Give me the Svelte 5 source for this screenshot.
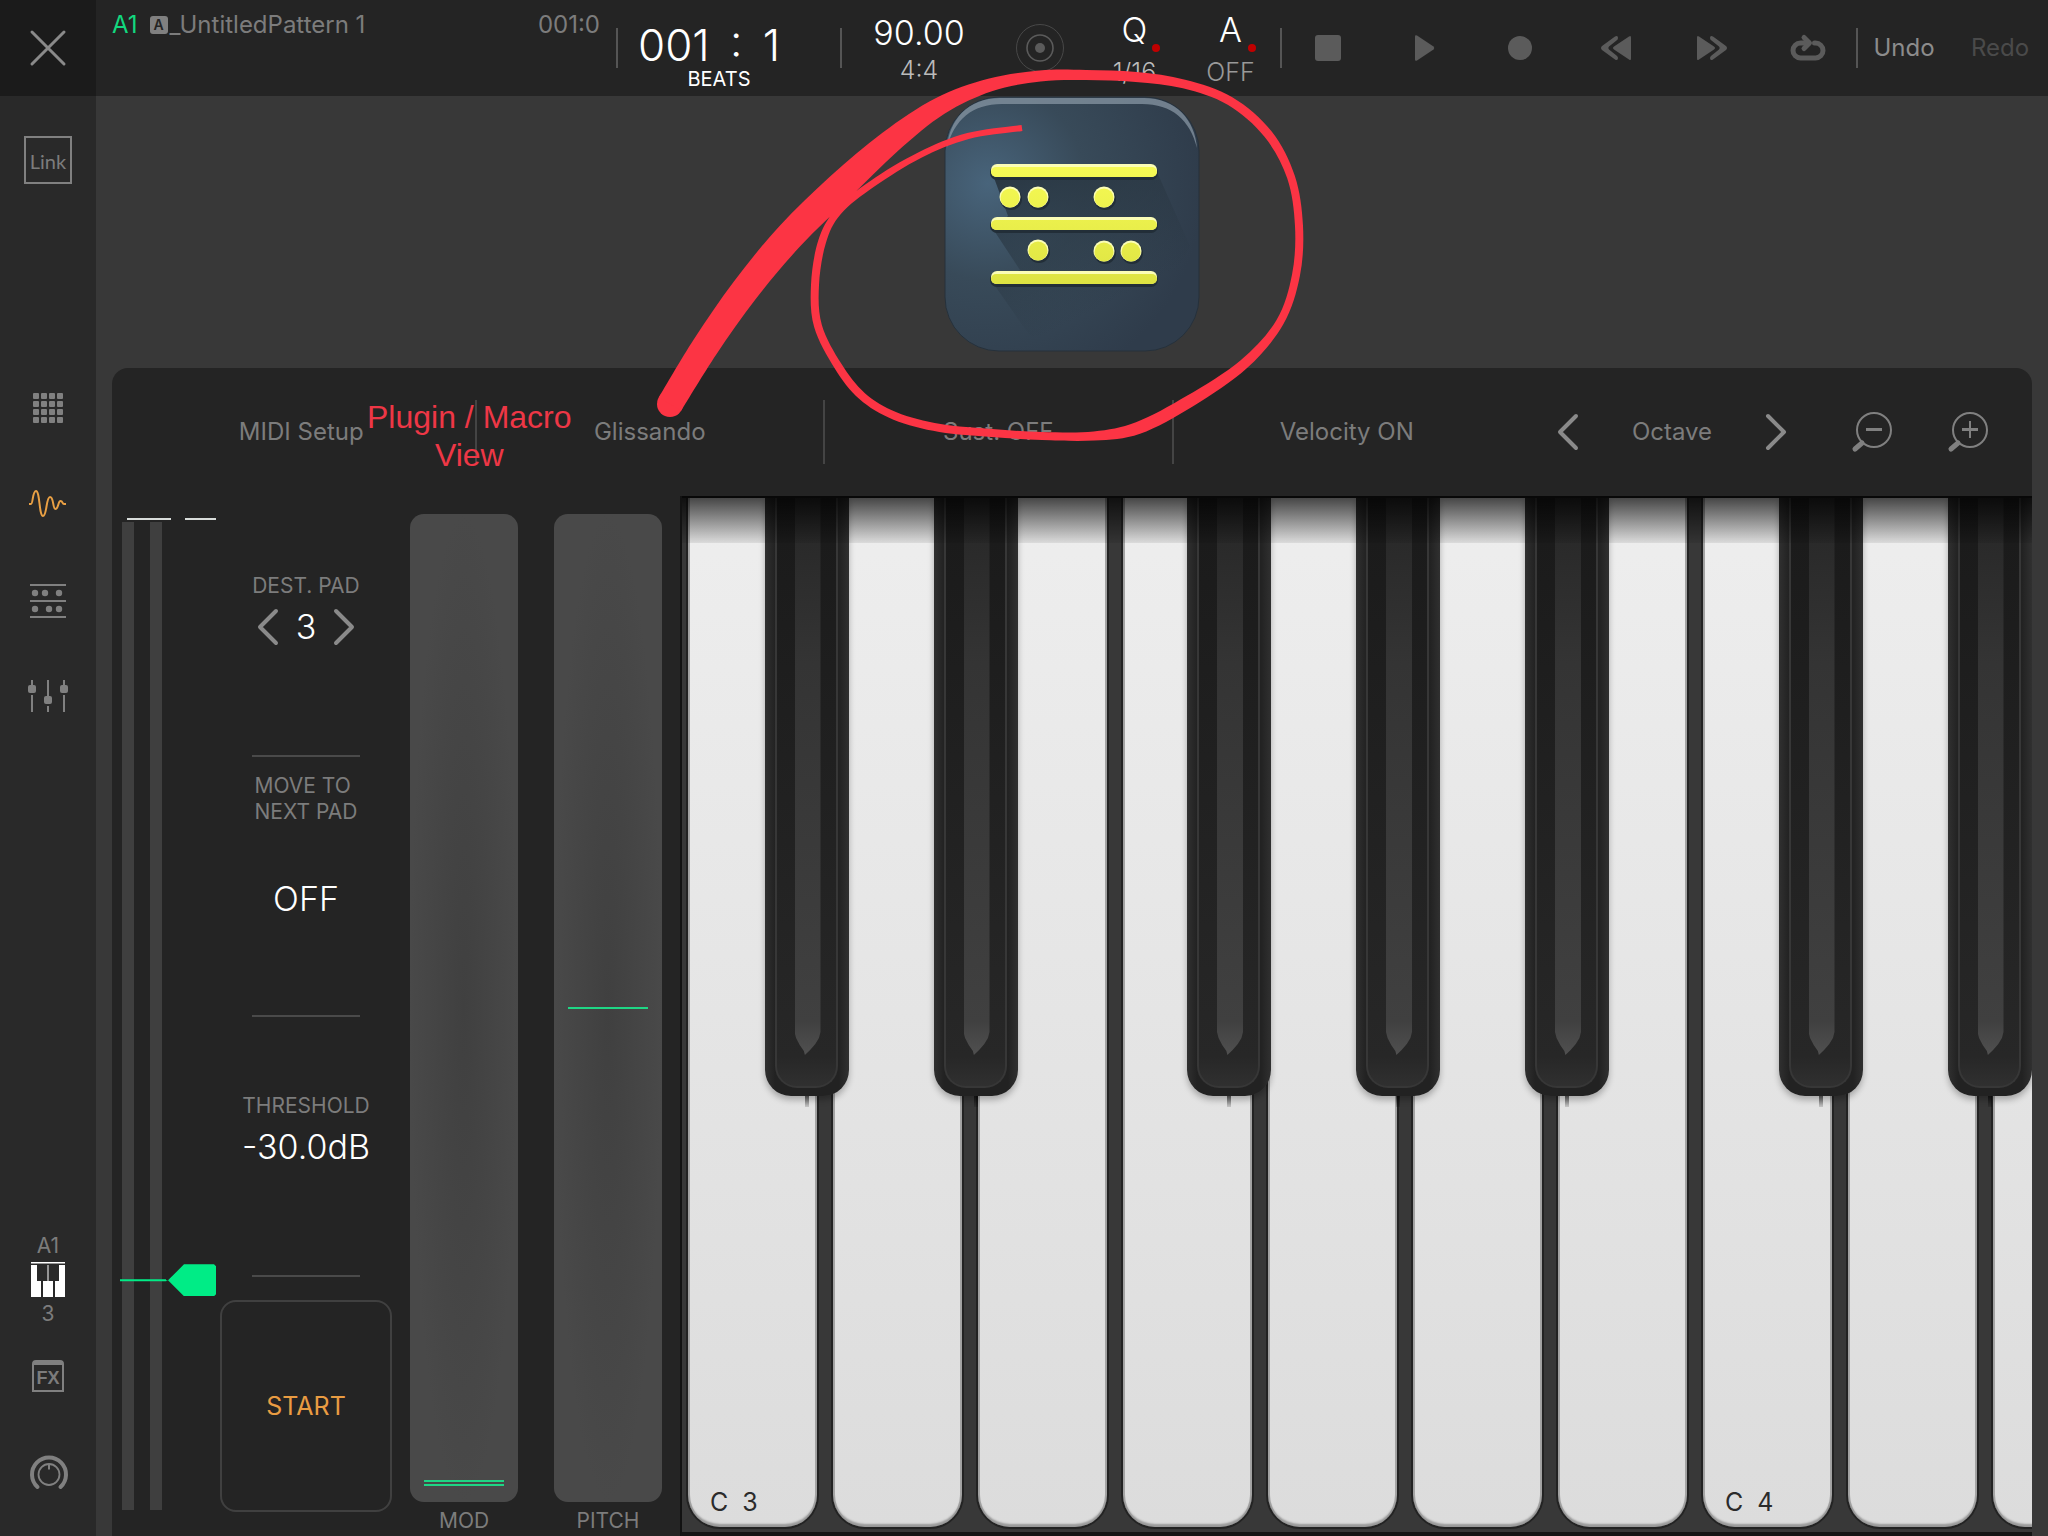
<script lang="ts">
  type Point = [number, number, number];

  const white = Array.from({ length: 10 }, (_, i) => i);
  const black = [1, 3, 6, 8, 10, 13, 15];
  const semitone = 1014 / 12;

  let mod = 0;
  let pitch = 0;
  let threshold = 232;

  // x, y, thickness of the marker line
  const stroke: Point[] = [
    [670, 404, 26], [705, 347, 27], [745, 290, 28], [790, 236, 29],
    [840, 187, 29], [890, 142, 24], [940, 106, 18], [990, 85, 13],
    [1040, 76, 11], [1086, 75, 10], [1136, 77, 10], [1184, 84, 9],
    [1230, 101, 9], [1268, 134, 9], [1291, 177, 8], [1299, 226, 8],
    [1296, 275, 8], [1280, 322, 8], [1244, 364, 10], [1190, 401, 12],
    [1138, 428, 12], [1094, 436, 9], [1042, 436, 8], [992, 433, 8],
    [940, 428, 8], [895, 416, 8], [862, 396, 8], [838, 366, 8],
    [818, 326, 8], [815, 285, 8], [822, 242, 8], [838, 212, 7],
    [872, 184, 7], [920, 155, 6], [968, 136, 6], [1022, 128, 6],
  ];

  function smooth(pts: number[][]): string {
    let d = '';
    for (let i = 0; i < pts.length - 1; i++) {
      const a = pts[Math.max(i - 1, 0)];
      const b = pts[i];
      const c = pts[i + 1];
      const e = pts[Math.min(i + 2, pts.length - 1)];
      d += `C${b[0] + (c[0] - a[0]) / 6} ${b[1] + (c[1] - a[1]) / 6} ${c[0] - (e[0] - b[0]) / 6} ${c[1] - (e[1] - b[1]) / 6} ${c[0]} ${c[1]}`;
    }
    return d;
  }

  function ribbon(pts: Point[]): string {
    const side = (s: number) => pts.map(([x, y, w], i) => {
      const a = pts[Math.max(i - 1, 0)];
      const b = pts[Math.min(i + 1, pts.length - 1)];
      const len = Math.hypot(b[0] - a[0], b[1] - a[1]);
      return [x - s * (b[1] - a[1]) / len * w / 2, y + s * (b[0] - a[0]) / len * w / 2];
    });
    const left = side(-1);
    const right = side(1).reverse();
    return `M${left[0]}${smooth(left)}L${right[0]}${smooth(right)}Z`;
  }
</script>

<div class="screen">
  <header>
    <button class="close" aria-label="Close">
      <svg width="40" height="40" viewBox="0 0 40 40"><path d="M4 4L36 36M36 4L4 36" /></svg>
    </button>
    <div class="pattern">
      <span class="slot">A1</span>
      <span class="badge">A</span>
      <span>_UntitledPattern 1</span>
      <span class="length">001:0</span>
    </div>
    <div class="position">
      <div class="count">001&thinsp; :&thinsp; 1</div>
      <div class="unit">BEATS</div>
    </div>
    <div class="tempo">
      <div class="big">90.00</div>
      <div class="small">4:4</div>
    </div>
    <button class="cell" aria-label="Metronome">
      <svg width="50" height="50" viewBox="0 0 50 50" fill="none" stroke="#5b5b5b">
        <circle cx="25" cy="25" r="23.5" stroke="#484848" />
        <circle cx="25" cy="25" r="13" stroke-width="1.6" />
        <circle cx="25" cy="25" r="5" fill="#5b5b5b" stroke="none" />
      </svg>
    </button>
    <button class="cell mode">
      <span class="big">Q</span>
      <i class="dot"></i>
      <span class="small">1/16</span>
    </button>
    <button class="cell mode">
      <span class="big">A</span>
      <i class="dot"></i>
      <span class="small dim">OFF</span>
    </button>
    <div class="transport">
      <button class="cell" aria-label="Stop">
        <svg width="36" height="36" viewBox="0 0 36 36"><rect x="5" y="5" width="26" height="26" rx="3" /></svg>
      </button>
      <button class="cell" aria-label="Play">
        <svg width="36" height="36" viewBox="0 0 36 36"><path d="M9 6.5Q9 4.500 11 5.500L27.500 16.500Q29 18 27.500 19.500L11 30.500Q9 31.500 9 29.500Z" /></svg>
      </button>
      <button class="cell" aria-label="Record">
        <svg width="36" height="36" viewBox="0 0 36 36"><circle cx="18" cy="18" r="12" /></svg>
      </button>
      <button class="cell" aria-label="Rewind">
        <svg width="36" height="36" viewBox="0 0 36 36">
          <path d="M33 7.500V28.500Q33 31 31 29.500L16 19.500Q14 18 16 16.500L31 6.500Q33 5 33 7.500Z" />
          <path d="M17 6.500Q20 5 20 8Q20 9.500 18.500 10.500L11 16.500Q9.500 18 11 19.500L18.500 25.500Q20 26.500 20 28Q20 31 17 29.500L4 20Q2 18 4 16Z" />
        </svg>
      </button>
      <button class="cell" aria-label="Fast forward">
        <svg width="36" height="36" viewBox="0 0 36 36">
          <g transform="matrix(-1 0 0 1 36 0)">
            <path d="M33 7.500V28.500Q33 31 31 29.500L16 19.500Q14 18 16 16.500L31 6.500Q33 5 33 7.500Z" />
            <path d="M17 6.500Q20 5 20 8Q20 9.500 18.500 10.500L11 16.500Q9.500 18 11 19.500L18.500 25.500Q20 26.500 20 28Q20 31 17 29.500L4 20Q2 18 4 16Z" />
          </g>
        </svg>
      </button>
      <button class="cell" aria-label="Loop">
        <svg class="loop" width="36" height="36" viewBox="0 0 36 36">
          <path d="M14 13H10.500A7.500 7.500 0 0 0 10.500 28H25.500A7.500 7.500 0 0 0 25.500 13H24.500" />
          <path d="M14 7.500L19.500 13L14 18.500" />
        </svg>
      </button>
    </div>
    <button class="cell text">Undo</button>
    <button class="cell text" disabled>Redo</button>
  </header>

  <nav>
    <button class="item link"><span>Link</span></button>
    <button class="item pads" aria-label="Pads">
      <svg width="48" height="48" viewBox="0 0 48 48" fill="#808080">
        {#each [9, 17, 25, 33] as y}
          {#each [9, 17, 25, 33] as x}
            <rect {x} {y} width="6" height="6" rx="1" />
          {/each}
        {/each}
      </svg>
    </button>
    <button class="item" aria-label="Wave">
      <svg width="48" height="48" viewBox="0 0 48 48" fill="none" stroke="#e9a044" stroke-width="2">
        <path d="M5 24H7C9 24 8.500 11 12 11C16 11 15 36 19 36C23 36 22 17 26 17C30 17 28.500 29 31.500 29C34.500 29 34 21 36.500 21C39 21 38 24 40 24H42" />
      </svg>
    </button>
    <button class="item" aria-label="Sequencer">
      <svg width="48" height="48" viewBox="0 0 48 48" fill="#808080">
        <path d="M6 8H42V10H6ZM6 24H42V26H6ZM6 40H42V42H6Z" />
        <circle cx="11" cy="17" r="3.200" /><circle cx="21" cy="17" r="3.200" /><circle cx="35" cy="17" r="3.200" />
        <circle cx="11" cy="33" r="3.200" /><circle cx="25" cy="33" r="3.200" /><circle cx="35" cy="33" r="3.200" />
      </svg>
    </button>
    <button class="item" aria-label="Mixer">
      <svg width="48" height="48" viewBox="0 0 48 48" fill="#808080">
        <path d="M7 8H9V13H7ZM7 23H9V40H7ZM23 8H25V24H23ZM23 34H25V40H23ZM39 8H41V13H39ZM39 23H41V40H39Z" />
        <rect x="4" y="13" width="8" height="8" rx="2" /><rect x="20" y="24" width="8" height="8" rx="2" /><rect x="36" y="13" width="8" height="8" rx="2" />
      </svg>
    </button>
    <button class="item keys">
      <span>A1</span>
      <svg width="36" height="36" viewBox="0 0 36 36" fill="#fff">
        <path d="M1 0H35V1.500H1ZM1 3H7V19H11V35H1ZM17.500 3H18.500V19H23V35H13V19H17.500ZM29 3H35V35H25V19H29Z" />
      </svg>
      <span>3</span>
    </button>
    <button class="item fx"><span>FX</span></button>
    <button class="item" aria-label="Macro">
      <svg width="48" height="48" viewBox="0 0 48 48" fill="none" stroke="#808080">
        <path d="M13.500 39A17 17 0 1 1 36.500 39" stroke-width="4" stroke-linecap="round" />
        <circle cx="25" cy="26.500" r="10.500" stroke-width="1.800" />
        <path d="M25 16V21.500" stroke-width="2" />
      </svg>
    </button>
  </nav>

  <main>
    <div class="view">
      <svg width="256" height="256" viewBox="0 0 256 256">
        <defs>
          <radialGradient id="face" cx="0.17" cy="0.34" r="0.85">
            <stop offset="0" stop-color="#48647b" />
            <stop offset="0.45" stop-color="#384a59" />
            <stop offset="1" stop-color="#2f3c4b" />
          </radialGradient>
          <linearGradient id="cast" x1="0" y1="0" x2="0.6" y2="1">
            <stop offset="0" stop-color="#283540" />
            <stop offset="0.85" stop-color="#283540" stop-opacity="0" />
          </linearGradient>
          <linearGradient id="bar" gradientUnits="userSpaceOnUse" x1="0" y1="66" x2="0" y2="190">
            <stop offset="0" stop-color="#f7fb55" />
            <stop offset="1" stop-color="#dde342" />
          </linearGradient>
        </defs>
        <rect x="1" y="1" width="254" height="254" rx="54" fill="url(#face)" stroke="#26313b" />
        <path d="M3 52C5 24 24 2 56 2H200C232 2 251 24 253 52C246 24 228 8 198 8H58C28 8 10 24 3 52Z" fill="#8796a3" fill-opacity="0.75" />
        <path d="M49 79L64 120L49 133L76 174L49 187L86 240H200L246 150L213 76Z" fill="url(#cast)" />
        {#each [68, 121, 175] as y}
          <rect x="46" y={y + 1} width="168" height="15" rx="7" fill="#222e38" />
          <rect x="47" {y} width="166" height="13" rx="6" fill="#fbfdb6" />
          <rect x="47" y={y + 3} width="166" height="10" rx="5" fill="url(#bar)" />
        {/each}
        {#each [[66, 101], [94, 101], [160, 101], [94, 154], [160, 155], [187, 155]] as [cx, cy]}
          <circle cx={cx + 1} cy={cy + 2} r="11" fill="#222e38" />
          <circle {cx} {cy} r="10.500" fill="#fbfdb6" />
          <circle {cx} cy={cy + 1} r="9.500" fill="url(#bar)" />
        {/each}
      </svg>
    </div>

    <section class="panel">
      <div class="toolbar">
        <button class="option">MIDI Setup</button>
        <button class="option">Glissando</button>
        <button class="option">Sust. OFF</button>
        <button class="option">Velocity ON</button>
        <button class="tool" aria-label="Octave down">
          <svg class="chevron" width="24" height="40" viewBox="0 0 24 40"><path d="M20 4L4 20L20 36" /></svg>
        </button>
        <span class="octave">Octave</span>
        <button class="tool" aria-label="Octave up">
          <svg class="chevron" width="24" height="40" viewBox="0 0 24 40"><path d="M4 4L20 20L4 36" /></svg>
        </button>
        {#each ['Zoom out', 'Zoom in'] as name}
          <button class="tool" aria-label={name}>
            <svg width="44" height="44" viewBox="0 0 44 44" fill="none" stroke="#808080">
              <circle cx="24" cy="20" r="17" stroke-width="2" />
              <path d="M12 33L5 39" stroke-width="5" stroke-linecap="round" />
              <path d="M16 19.500H32" stroke-width="3" />
              {#if name === 'Zoom in'}
                <path d="M24 11V28" stroke-width="2" />
              {/if}
            </svg>
          </button>
        {/each}
      </div>

      <div class="body">
        <div class="meter">
          <div class="peaks"><i></i><i></i></div>
          <div class="bars"><i></i><i></i></div>
          <input type="range" aria-label="Threshold" min="0" max="1000" bind:value={threshold} />
        </div>

        <div class="controls">
          <div class="block">
            <div class="label">DEST. PAD</div>
            <div class="stepper">
              <button aria-label="Previous pad">
                <svg class="chevron" width="24" height="40" viewBox="0 0 24 40"><path d="M20 4L4 20L20 36" /></svg>
              </button>
              <span class="value">3</span>
              <button aria-label="Next pad">
                <svg class="chevron" width="24" height="40" viewBox="0 0 24 40"><path d="M4 4L20 20L4 36" /></svg>
              </button>
            </div>
          </div>
          <div class="block next">
            <div class="label">MOVE TO<br />NEXT PAD</div>
            <button class="value">OFF</button>
          </div>
          <div class="block">
            <div class="label">THRESHOLD</div>
            <div class="value">-30.0dB</div>
          </div>
          <button class="start">START</button>
        </div>

        <div class="wheel mod">
          <input id="mod" type="range" min="0" max="127" bind:value={mod} />
          <label for="mod">MOD</label>
        </div>
        <div class="wheel">
          <input id="pitch" type="range" min="-64" max="64" bind:value={pitch} />
          <label for="pitch">PITCH</label>
        </div>

        <div class="keyboard">
          {#each white as i}
            <button class="white" aria-label="White key">
              {#if i % 7 === 0}C&nbsp; {3 + i / 7}{/if}
            </button>
          {/each}
          {#each black as n}
            <button class="black" aria-label="Black key" style="left:{n * semitone - 2}px">
              <span class="top"><span class="groove"></span></span>
            </button>
          {/each}
          <div class="shade"></div>
        </div>
      </div>
    </section>
  </main>

  <p class="note">Plugin / Macro<br />View</p>
  <svg class="marker" width="1310" height="450" viewBox="0 0 1310 450" fill="#fc3444">
    <circle cx="670" cy="404" r="13" />
    <path d={ribbon(stroke)} />
  </svg>
</div>

<style>
  :global(body) {
    background: #383838;
  }

  .screen {
    position: relative;
    display: grid;
    grid-template: 96px 1fr / 96px 1fr;
    min-height: 100vh;
    overflow: hidden;
    font-family: Inter, "Liberation Sans", sans-serif;
    font-size: 24px;
    font-weight: 400;
    line-height: 32px;
    color: #7c7c7c;
  }

  button {
    padding: 0;
    border: 0;
    background: none;
    color: inherit;
    font: inherit;
  }

  svg {
    display: block;
  }

  header {
    grid-column: 1 / 3;
    display: flex;
    background: #242424;
  }

  .close {
    width: 96px;
    background: #1b1b1b;
    display: grid;
    place-items: center;
  }

  .close svg, .chevron {
    fill: none;
    stroke: #8a8a8a;
    stroke-width: 4;
    stroke-linecap: round;
    stroke-linejoin: round;
  }

  .close svg {
    stroke-width: 3;
  }

  .pattern {
    flex: 1;
    display: flex;
    align-items: flex-start;
    padding: 9px 16px 0;
  }

  .slot {
    color: #12d87f;
    margin-right: 12px;
  }

  .badge {
    width: 18px;
    margin: 7px 2px 0 0;
    border-radius: 3px;
    background: #808080;
    color: #242424;
    font-size: 14px;
    font-weight: 600;
    line-height: 18px;
    text-align: center;
  }

  .length {
    margin-left: auto;
  }

  .position, .tempo, .transport, .transport + .cell {
    background: linear-gradient(#555, #555) 0 50% / 2px 40px no-repeat;
  }

  .position {
    width: 224px;
    box-sizing: border-box;
    padding: 23px 0 0 22px;
    color: #fff;
  }

  .count {
    font-size: 44px;
    font-weight: 300;
    line-height: 44px;
    white-space: nowrap;
  }

  .unit {
    width: 162px;
    font-size: 20px;
    line-height: 24px;
    text-align: center;
  }

  .tempo {
    width: 152px;
    box-sizing: border-box;
    padding: 13px 0 0 6px;
    text-align: center;
  }

  .big {
    display: block;
    color: #fff;
    font-size: 34px;
    font-weight: 300;
    line-height: 40px;
  }

  .small {
    display: block;
    color: #bbb;
    font-size: 25px;
    font-weight: 300;
    line-height: 34px;
  }

  .dim {
    color: #999;
  }

  .cell {
    width: 96px;
    display: grid;
    place-items: center;
  }

  .mode {
    position: relative;
    align-content: start;
    row-gap: 5px;
    padding: 10px 3px 0 0;
  }

  .dot {
    position: absolute;
    left: 64px;
    top: 44px;
    width: 8px;
    height: 8px;
    border-radius: 50%;
    background: #c00000;
  }

  .transport {
    display: flex;
    fill: #5b5b5b;
  }

  .loop {
    fill: none;
    stroke: #5b5b5b;
    stroke-width: 5;
    stroke-linecap: round;
    stroke-linejoin: round;
  }

  .text {
    color: #8c8c8c;
  }

  .text:disabled {
    color: #4a4a4a;
  }

  nav {
    display: flex;
    flex-direction: column;
    padding: 16px 0;
    background: #292929;
  }

  .item {
    height: 96px;
    display: grid;
    place-items: center;
    place-content: center;
  }

  .link span {
    width: 44px;
    height: 44px;
    border: 2px solid #808080;
    font-family: Lato, sans-serif;
    font-size: 20px;
    line-height: 46px;
    text-align: center;
  }

  .pads {
    margin-top: 152px;
  }

  .keys {
    margin-top: auto;
    font-size: 21px;
    line-height: 26px;
    row-gap: 3px;
  }

  .fx span {
    width: 28px;
    height: 25px;
    border: 2px solid #808080;
    border-top-width: 5px;
    border-radius: 4px 4px 0 0;
    font-family: "Liberation Sans", sans-serif;
    font-size: 18px;
    font-weight: 700;
    line-height: 26px;
    text-align: center;
  }

  main {
    display: flex;
    flex-direction: column;
    padding: 0 16px;
    background: #383838;
    min-width: 0;
  }

  .view {
    height: 272px;
    display: flex;
    justify-content: center;
    align-items: flex-start;
  }

  .panel {
    flex: 1;
    display: flex;
    flex-direction: column;
    border-radius: 16px 16px 0 0;
    background: #242424;
  }

  .toolbar {
    height: 128px;
    display: flex;
    align-items: center;
    padding: 0 16px;
  }

  .option {
    flex: 1;
    height: 64px;
    border-right: 2px solid #444;
  }

  .option:nth-child(4) {
    border-right: 0;
  }

  .tool {
    width: 96px;
    height: 96px;
    display: grid;
    place-items: center;
  }

  .octave {
    width: 112px;
    text-align: center;
  }

  .body {
    flex: 1;
    display: flex;
  }

  .meter {
    position: relative;
    width: 108px;
    box-sizing: border-box;
    padding: 22px 0 26px 10px;
    display: flex;
    flex-direction: column;
    row-gap: 2px;
  }

  .peaks {
    display: flex;
    gap: 14px;
    height: 2px;
    padding-left: 5px;
  }

  .peaks i {
    width: 44px;
    background: #d8dcda;
  }

  .peaks i + i {
    width: 31px;
  }

  .bars {
    flex: 1;
    display: flex;
    gap: 16px;
  }

  .bars i {
    width: 12px;
    background: #3f3f3f;
  }

  input[type="range"] {
    appearance: none;
    margin: 0;
    background: none;
    writing-mode: vertical-lr;
    direction: rtl;
  }

  .meter input {
    position: absolute;
    left: 8px;
    top: 8px;
    bottom: 10px;
    width: 96px;
    height: auto;
  }

  .meter input::-webkit-slider-thumb {
    appearance: none;
    width: 96px;
    height: 32px;
    background: #00ec86;
    clip-path: polygon(0 15px, 46px 15px, 46px 16px, 48px 16px, 64px 0, 94px 0, 96px 2px, 96px 30px, 94px 32px, 64px 32px, 48px 16px, 46px 17px, 0 17px);
  }

  .controls {
    width: 172px;
    padding-top: 1px;
    display: flex;
    flex-direction: column;
  }

  .block {
    height: 260px;
    box-sizing: border-box;
    padding-top: 76px;
    display: flex;
    flex-direction: column;
    align-items: center;
    row-gap: 6px;
    background: linear-gradient(#4a4a4a, #4a4a4a) 50% 100% / 108px 2px no-repeat;
  }

  .next {
    padding-top: 16px;
    row-gap: 52px;
  }

  .label, .wheel label {
    font-size: 21px;
    line-height: 26px;
  }

  .value {
    color: #fff;
    font-size: 34px;
    font-weight: 300;
    line-height: 44px;
  }

  .stepper {
    width: 100px;
    display: flex;
    justify-content: space-between;
    align-items: center;
  }

  .start {
    flex: 1;
    margin: 23px 0 24px;
    border: 2px solid #404040;
    border-radius: 16px;
    color: #e99c42;
    font-size: 25px;
  }

  .wheel {
    width: 108px;
    margin: 18px 18px 2px;
    display: flex;
    flex-direction: column;
    row-gap: 6px;
    text-align: center;
  }

  .wheel input {
    flex: 1;
    width: 108px;
    border-radius: 14px;
    background: radial-gradient(50% 50%, #404040, #494949);
  }

  .wheel input::-webkit-slider-thumb {
    appearance: none;
    width: 108px;
    height: 40px;
    background: linear-gradient(#1fd685, #1fd685) 50% 50% / 80px 2px no-repeat;
  }

  .mod input::-webkit-slider-thumb {
    background:
      linear-gradient(#1fd685, #1fd685) 50% 18px / 80px 2px no-repeat,
      linear-gradient(#1fd685, #1fd685) 50% 22px / 80px 2px no-repeat;
  }

  .keyboard {
    position: relative;
    flex: 1;
    min-width: 0;
    display: flex;
    gap: 12px;
    padding: 0 0 3px 4px;
    border-left: 2px solid #121212;
    border-bottom: 4px solid #151515;
    background: #383838;
    overflow: hidden;
  }

  .white {
    flex: none;
    width: 133px;
    box-sizing: border-box;
    display: flex;
    align-items: flex-end;
    padding: 0 0 9px 22px;
    border: 2px solid #232323;
    border-top: 0;
    border-radius: 0 0 34px 34px;
    background: linear-gradient(#eee, #dcdcdc);
    box-shadow: inset 0 -3px 2px #999, inset 2px 0 #a5a5a5, inset -2px 0 #a5a5a5;
    color: #2b2b2b;
    font-size: 25px;
  }

  .black {
    position: absolute;
    top: 0;
    width: 84px;
    height: 600px;
    padding: 0 11px 8px 10px;
    border-radius: 0 0 26px 26px;
    background: linear-gradient(90deg, #303030, #222 12%, #222 88%, #303030);
    box-shadow: 0 4px 6px #0004;
  }

  .black::after {
    content: "";
    position: absolute;
    left: 40px;
    top: 100%;
    width: 4px;
    height: 11px;
    background: linear-gradient(#0009, #0002);
  }

  .top {
    display: flex;
    justify-content: center;
    height: 100%;
    box-sizing: border-box;
    padding-left: 3px;
    border: 2px solid #373737;
    border-top: 0;
    border-radius: 0 0 22px 22px;
    background: linear-gradient(#1a1a1a, #272727 95%, #303030);
  }

  .groove {
    width: 26px;
    height: 559px;
    clip-path: polygon(0 0, 100% 0, 100% 536px, 94% 542px, 80% 548px, 60% 554px, 40% 559px, 36% 555px, 20% 549px, 6% 542px, 0 536px);
    background: linear-gradient(#262626, #343434 30%, #404040 94%, #505050);
  }

  .shade {
    position: absolute;
    inset: 0 0 auto;
    height: 47px;
    border-top: 2px solid #080808;
    box-sizing: border-box;
    background: linear-gradient(#000000b4, #00000014);
    pointer-events: none;
  }

  .note {
    position: absolute;
    left: 367px;
    top: 398px;
    margin: 0;
    color: #ee3746;
    font-family: "Liberation Sans", sans-serif;
    font-size: 32px;
    line-height: 38px;
    text-align: center;
  }

  .marker {
    position: absolute;
    left: 0;
    top: 0;
    pointer-events: none;
  }
</style>
